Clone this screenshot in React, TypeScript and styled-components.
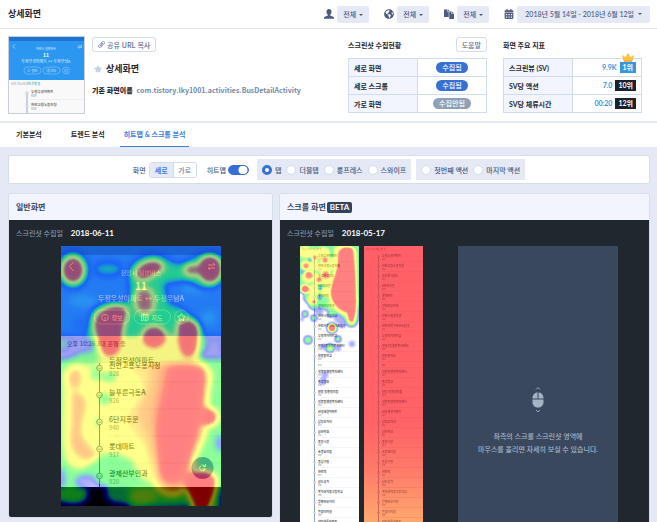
import React from "react";
import styled, { createGlobalStyle, css } from "styled-components";
import { FaCalendarAlt, FaGlobeAmericas, FaStar } from "react-icons/fa";

const font = `Lato, "Noto Sans CJK KR", sans-serif`;
const fontKr = `"Noto Sans CJK KR", sans-serif`;

const GlobalStyle = createGlobalStyle`
  * { box-sizing: border-box; }
  body { margin: 0; background: #e4e9f5; }
  button, select, input { font: inherit; color: inherit; margin: 0; }
`;

const Page = styled.div`
  height: 100vh;
  overflow: hidden;
  font: 500 7px/12px ${font};
  color: #1f2730;
`;

/* ---------- top bar ---------- */

const TopBar = styled.header`
  display: flex;
  align-items: center;
  justify-content: space-between;
  height: 29px;
  padding: 0 7px 0 8px;
  background: #fff;
  border-bottom: 1px solid #dfe5f2;
`;

const PageTitle = styled.h1`
  margin: 0;
  font-size: 9px;
  font-weight: 700;
`;

const Filters = styled.div`
  display: flex;
  gap: 15px;
`;

const Filter = styled.label`
  display: flex;
  align-items: center;
  gap: 3px;
  color: #4d5b7f;
  svg { width: 10px; height: 10px; }
`;

const SelectBox = styled.span`
  position: relative;
  display: flex;
`;

const Select = styled.select`
  appearance: none;
  width: 32px;
  height: 17px;
  padding: 0 12px 0 6px;
  border: 0;
  border-radius: 2px;
  background: #e4e9f5;
  line-height: 17px;
`;

const Caret = styled.i`
  width: 0;
  height: 0;
  border: 2px solid transparent;
  border-top-color: #4d5b7f;
  border-bottom: 0;
`;

const SelectCaret = styled(Caret)`
  position: absolute;
  right: 6px;
  top: 8px;
  pointer-events: none;
`;

const DateButton = styled.button`
  display: flex;
  align-items: center;
  gap: 4px;
  height: 17px;
  padding: 0 8px;
  border: 0;
  border-radius: 2px;
  background: #e4e9f5;
  white-space: nowrap;
`;

/* ---------- summary ---------- */

const Summary = styled.section`
  display: flex;
  padding: 7px 15px 7px 8px;
  background: #fff;
  border-bottom: 2px solid #e4e9f5;
`;

const Thumb = styled.div`
  flex: none;
  width: 77px;
  height: 78px;
  border: 1px solid #c9cfda;
  svg { display: block; width: 100%; height: 100%; }
`;

const Identity = styled.div`
  display: flex;
  flex: 1;
  flex-direction: column;
  align-items: flex-start;
  padding: 1px 0 0 7px;
`;

const OutlineButton = styled.button`
  display: flex;
  align-items: center;
  gap: 2px;
  height: 15px;
  padding: 0 5px;
  border: 1px solid #d3dceb;
  border-radius: 3px;
  background: #fff;
  color: #60708e;
  font-family: ${fontKr};
  white-space: nowrap;
  svg { width: 7px; height: 7px; }
`;

const ScreenName = styled.h2`
  display: flex;
  align-items: center;
  gap: 4px;
  margin: 11px 0 9px 2px;
  font-size: 9px;
  font-weight: 700;
  line-height: 12px;
  svg { width: 8px; height: 8px; color: #c3d0e4; }
`;

const NameRow = styled.p`
  display: flex;
  gap: 4px;
  margin: 0;
  font-family: ${fontKr};
  font-weight: 700;
  color: #7389a7;
  white-space: nowrap;
  strong { color: #1f2730; }
`;

const Stat = styled.section`
  width: 139px;
  & + & { margin-left: 16px; }
`;

const StatHead = styled.div`
  display: flex;
  align-items: center;
  justify-content: space-between;
  height: 17px;
  margin-bottom: 5px;
`;

const StatTitle = styled.h3`
  margin: 0;
  font-size: 7px;
  font-weight: 700;
`;

const StatTable = styled.table`
  width: 100%;
  border-collapse: collapse;
  table-layout: fixed;
  th, td {
    height: 18px;
    padding: 0 5px;
    border: 1px solid #cfdcec;
    line-height: 10px;
  }
  th {
    background: #f2f5fd;
    text-align: left;
    font-weight: 700;
  }
`;

const StatusCell = styled.td`
  text-align: center;
`;

const Pill = styled.span<{ $off?: boolean }>`
  display: inline-block;
  padding: 0 6px;
  border-radius: 6px;
  background: ${(p) => (p.$off ? "#8fa1b6" : "#3670d3")};
  color: #fff;
  line-height: 11px;
`;

const MetricCell = styled.td`
  text-align: right;
  color: #2f95dc;
  font-weight: 700;
`;

const Rank = styled.span<{ $first?: boolean }>`
  position: relative;
  display: inline-block;
  margin-left: 3px;
  padding: 0 3px;
  background: ${(p) => (p.$first ? "#3498db" : "#1b222c")};
  color: #fff;
  line-height: 11px;
`;

const Crown = styled.svg`
  position: absolute;
  top: -9px;
  left: 2px;
  width: 12px;
  height: 9px;
`;

/* ---------- tabs ---------- */

const Tabs = styled.nav`
  display: flex;
  gap: 21px;
  height: 24px;
  padding-left: 12px;
  background: #fff;
`;

const Tab = styled.a<{ $active?: boolean }>`
  padding: 0 4px;
  border-bottom: 1px solid transparent;
  color: #1f2730;
  font-weight: 700;
  line-height: 23px;
  text-decoration: none;
  white-space: nowrap;
  &:last-child { margin-left: -10px; }
  ${(p) =>
    p.$active &&
    css`
      border-color: #3b7ddd;
      color: #3b7ddd;
    `}
`;

/* ---------- options ---------- */

const Content = styled.main`
  padding: 8px 7px 5px 8px;
`;

const Options = styled.form`
  display: flex;
  align-items: center;
  justify-content: center;
  height: 29px;
  margin-bottom: 9px;
  border: 1px solid #d5deec;
  border-radius: 2px;
  background: #fff;
  color: #47587a;
  white-space: nowrap;
`;

const Segmented = styled.div`
  display: flex;
  margin: 0 10px 0 3px;
  border: 1px solid #d3dceb;
  border-radius: 3px;
  overflow: hidden;
`;

const Segment = styled.button<{ $active?: boolean }>`
  width: 23px;
  height: 14px;
  padding: 0;
  border: 0;
  background: ${(p) => (p.$active ? "#e4e9f5" : "#fff")};
  color: ${(p) => (p.$active ? "#3b7ddd" : "#7484a0")};
  font-weight: ${(p) => (p.$active ? 700 : 500)};
  & + & { border-left: 1px solid #d3dceb; }
`;

const ToggleLabel = styled.label`
  display: flex;
  align-items: center;
  gap: 2px;
`;

const Toggle = styled.input`
  appearance: none;
  width: 21px;
  height: 10px;
  border: 1px solid #3670d3;
  border-radius: 5px;
  background: radial-gradient(circle at 14px 4px, #fff 4px, #3670d3 5px);
`;

const RadioGroup = styled.fieldset`
  display: flex;
  align-items: center;
  gap: 5px;
  height: 21px;
  margin: 0 0 0 8px;
  padding: 0 5px;
  border: 0;
  background: #e4e9f5;
  & + & { margin-left: 5px; }
`;

const RadioLabel = styled.label`
  display: flex;
  align-items: center;
  gap: 3px;
`;

const Radio = styled.input`
  appearance: none;
  width: 10px;
  height: 10px;
  border: 1px solid #d3dceb;
  border-radius: 50%;
  background: #fff;
  &:checked { border: 3px solid #3670d3; }
`;

/* ---------- panels ---------- */

const Panels = styled.div`
  display: grid;
  grid-template-columns: 5fr 7fr;
  align-items: start;
  gap: 6px;
`;

const Panel = styled.section`
  border: 1px solid #d5deec;
  border-radius: 3px;
  overflow: hidden;
`;

const PanelHead = styled.h2`
  display: flex;
  align-items: center;
  gap: 1px;
  height: 26px;
  margin: 0;
  padding: 0 7px;
  background: #f2f5fd;
  color: #34435c;
  font-size: 8px;
  font-weight: 700;
`;

const Beta = styled.span`
  padding: 0 3px;
  border-radius: 2px;
  background: #34435c;
  color: #fff;
  line-height: 11px;
`;

const PanelBody = styled.div<{ $tall?: boolean }>`
  padding-bottom: ${(p) => (p.$tall ? "40px" : "11px")};
  background: #20272f;
`;

const Collected = styled.p`
  display: flex;
  gap: 8px;
  margin: 0;
  padding: 7px;
  color: #8495a9;
  strong { color: #fff; font-size: 8px; }
`;

const PhoneShot = styled.svg`
  display: block;
  width: 160px;
  height: 260px;
  margin: 0 auto;
`;

const ScrollArea = styled.div`
  display: flex;
  justify-content: space-between;
  padding: 0 31px 0 20px;
`;

const Strips = styled.div`
  display: flex;
  gap: 5px;
`;

const StripShot = styled.svg`
  width: 59px;
  height: 320px;
`;

const Preview = styled.div`
  display: flex;
  flex-direction: column;
  align-items: center;
  width: 160px;
  padding-top: 141px;
  background: #3a485e;
  color: #a6b3c5;
  line-height: 13px;
  text-align: center;
  white-space: nowrap;
  svg { width: 12px; height: 26px; margin-bottom: 17px; }
  p { margin: 0; }
`;

/* ---------- drawings ---------- */

const UserIcon = () => (
  <svg viewBox="0 0 20 20" fill="currentColor" aria-hidden="true">
    <path d="M10 0c3 0 5 2 5 5.500 0 2.500-1 4.500-2.500 5.800v1.700c2 1.200 5.500 2 7.500 4v2.500H0V17c2-2 5.500-2.800 7.500-4v-1.700C6 10 5 8 5 5.500 5 2 7 0 10 0z" />
  </svg>
);

const CopyIcon = () => (
  <svg viewBox="0 0 20 20" fill="currentColor" aria-hidden="true">
    <path d="M0 1h7v5h2.500V16H0zM8 1l2.500 2.500V5H8z" />
    <path d="M10.500 5H15v5h5v10h-9.500zM16 5l4 4h-4z" />
  </svg>
);

const LinkIcon = () => (
  <svg viewBox="0 0 24 24" fill="none" stroke="currentColor" strokeWidth="2.600" strokeLinecap="round" aria-hidden="true">
    <path d="M9 15.500 16.500 8M11 7l4.500-4.500a4 4 0 0 1 6 6L15 15a4 4 0 0 1-5 .500M14 16l-5 5a4 4 0 0 1-6-6l6.500-6.500a4 4 0 0 1 4-.500" />
  </svg>
);

const MouseIcon = () => (
  <svg viewBox="0 0 24 52" aria-hidden="true">
    <path d="M8 5l4-4 4 4M8 46l4 4 4-4" fill="none" stroke="#a6b3c5" strokeWidth="1.800" />
    <path d="M11 11v12H1c0-7 4-12 10-12zM13 11c6 0 10 5 10 12H13zM1 25h22v5c0 7-4.500 11-11 11S1 37 1 30z" fill="#a6b3c5" />
  </svg>
);

const CrownIcon = () => (
  <Crown viewBox="0 0 24 18" aria-hidden="true">
    <path d="M1 5l6 4 5-8 5 8 6-4-3 12H4z" fill="#fdc23e" stroke="#f6a73b" strokeWidth="1" />
    <path d="M4 15h16v2H4z" fill="#f39a3b" />
  </Crown>
);

const Thumbnail = () => (
  <svg viewBox="0 0 75 76" preserveAspectRatio="none" fontFamily="Noto Sans CJK KR, sans-serif" aria-hidden="true">
    <rect width="75" height="76" fill="#f9f9f9" />
    <rect width="75" height="43" fill="#2b97f0" />
    <rect width="75" height="4" fill="#1d75d2" />
    <g fill="none" stroke="#8cc6f7" strokeWidth=".6">
      <path d="M6 7.500 4 9.500l2 2M69 9h4l-1-1M73 10.500h-4l1 1" stroke="#d5ebfc" />
      <rect x="15" y="30" width="17" height="7" rx="3.500" />
      <rect x="34" y="30" width="17" height="7" rx="3.500" />
      <circle cx="57" cy="33.500" r="3.500" />
      <circle cx="20" cy="33.500" r="1.200" />
      <path d="M38 32h3v3h-3zM39.500 32v3M57 31.500l.6 1.300 1.400.2-1 1 .2 1.400-1.200-.7-1.200.7.2-1.400-1-1 1.400-.2z" />
    </g>
    <g fill="#cfe8fc" textAnchor="middle">
      <text x="37" y="13" fontSize="3">천안시 일반버스</text>
      <text x="37" y="20" fontSize="5" fontWeight="700" fill="#fff">11</text>
      <text x="37" y="25.500" fontSize="4">두정우성아파트 ↔ 두정우남A</text>
      <text x="25.500" y="34.800" fontSize="3">정보</text>
      <text x="44.500" y="34.800" fontSize="3">지도</text>
    </g>
    <text x="2" y="47.500" fontSize="3" fill="#a0a7ae">오후 10:26 <tspan fill="#36a6a6">3대 운행 중</tspan></text>
    <path d="M18 56v20" stroke="#b3c0d6" strokeWidth="1.400" />
    <circle cx="18" cy="56" r="1.300" fill="#fff" stroke="#a5b4cc" strokeWidth=".6" />
    <circle cx="18" cy="69" r="1.300" fill="#fff" stroke="#a5b4cc" strokeWidth=".6" />
    <path d="M22 62.500h53" stroke="#e8e8e8" strokeWidth=".6" />
    <g fontSize="3.500" fill="#333">
      <text x="22" y="55.500">두정우성아파트</text>
      <text x="22" y="68.500">천안고용노동지청</text>
      <text x="22" y="59.500" fontSize="3" fill="#999">929</text>
      <text x="22" y="72.500" fontSize="3" fill="#999">928</text>
    </g>
  </svg>
);

/* Grey levels are blurred, then mapped to the blue-green-yellow-red heat ramp. */
const HeatFilter = ({ id, blur }: { id: string; blur: number }) => (
  <filter id={id} x="-10%" y="-10%" width="120%" height="120%" colorInterpolationFilters="sRGB">
    <feGaussianBlur stdDeviation={blur} />
    <feColorMatrix values="1 0 0 0 0  1 0 0 0 0  1 0 0 0 0  1 0 0 0 0" />
    <feComponentTransfer>
      <feFuncR type="table" tableValues="0 0 0 0 .1 .6 1 1 1 1 1" />
      <feFuncG type="table" tableValues="0 0 .1 .7 1 1 1 1 .6 .1 0" />
      <feFuncB type="table" tableValues="1 1 1 .6 .2 .1 .1 .1 .05 0 0" />
      <feFuncA type="table" tableValues="0 .25 .4 .5 .5 .5 .5 .5 .5 .5 .5" />
    </feComponentTransfer>
  </filter>
);

const G = { none: "#000", tint: "#262626", green: "#666", lime: "#808080", yellow: "#a6a6a6", orange: "#c6c6c6", red: "#fff" };

const stops = [
  { name: "천안고용노동지청", no: "928", y: 122 },
  { name: "늘푸른극동A", no: "926", y: 149 },
  { name: "6단지후문", no: "940", y: 176 },
  { name: "롯데마트", no: "917", y: 203 },
  { name: "광제산부인과", no: "920", y: 230 },
];

const HeatPhone = () => (
  <PhoneShot viewBox="0 0 160 260" fontFamily="Noto Sans CJK KR, sans-serif" role="img" aria-label="일반화면 히트맵">
    <defs>
      <HeatFilter id="heat-phone" blur={3} />
    </defs>
    <rect width="160" height="260" fill="#fff" />
    <rect width="160" height="90" fill="#2b97f0" />
    <rect width="160" height="9" fill="#2178c8" />
    <rect y="90" width="160" height="27" fill="#e9e9ea" />
    <rect y="241" width="160" height="19" fill="#000" />
    <g fill="none" stroke="#fff" strokeWidth=".9">
      <path d="M12.500 16 8.500 20.500l4 4.500M147 19h7l-2-2M154 22h-7l2 2" />
      <rect x="33.500" y="64" width="35" height="14" rx="7" opacity=".5" />
      <rect x="73" y="64" width="36.500" height="14" rx="7" opacity=".5" />
      <circle cx="120.500" cy="71" r="7" opacity=".5" />
      <circle cx="44" cy="71.500" r="3.300" />
      <path d="M44 71v2.500M44 69.200v.8M80.500 69l2.200-1 2.200 1 2.200-1v6l-2.200 1-2.200-1-2.200 1zM82.700 68v6M84.900 69v6" />
      <path d="M120.500 67.500l1.200 2.500 2.700.3-2 1.900.5 2.700-2.400-1.300-2.400 1.300.5-2.700-2-1.900 2.700-.3z" />
    </g>
    <g fill="#fff" textAnchor="middle">
      <text x="80" y="28.500" fontSize="6" opacity=".7">천안시 일반버스</text>
      <text x="80" y="44" fontSize="10" fontWeight="700">11</text>
      <text x="80" y="54.500" fontSize="7" opacity=".8">두정우성아파트 ↔ 두정우남A</text>
      <text x="56" y="74" fontSize="6">정보</text>
      <text x="96" y="74" fontSize="6">지도</text>
    </g>
    <text x="6" y="100" fontSize="6" fill="#666">오후 10:26 3대 운행 중</text>
    <text x="48" y="117" fontSize="7" fill="#222">두정우성아파트</text>
    <path d="M38.500 117v124" stroke="#35506a" strokeWidth="1" />
    <path d="M48 136h112M48 163h112M48 190h112M48 217h112" stroke="#e4e4e4" strokeWidth=".6" />
    {stops.map((s) => (
      <g key={s.no}>
        <circle cx="38.500" cy={s.y} r="2.800" fill="#eee" stroke="#35506a" strokeWidth=".8" />
        <path d={`M37 ${s.y - 0.5}l1.500 1.500 1.500-1.500`} fill="none" stroke="#35506a" strokeWidth=".7" />
        <text x="48" y={s.y} fontSize="7" fill="#111">{s.name}</text>
        <text x="48" y={s.y + 8} fontSize="6" fill="#888">{s.no}</text>
      </g>
    ))}
    <circle cx="141.500" cy="222" r="11" fill="#6a68c4" />
    <path d="M144 220a3 3 0 1 0 .5 3h-3M144.500 218v2.500h-2.500" fill="none" stroke="#fff" strokeWidth="1" />
    <g filter="url(#heat-phone)">
      <rect x="-20" y="-20" width="200" height="300" fill="#131313" />
      <ellipse cx="22" cy="55" rx="14" ry="6" fill="#030303" />
      <ellipse cx="134" cy="42" rx="14" ry="6" fill="#030303" />
      <ellipse cx="20" cy="78" rx="8" ry="6" fill="#202020" />
      <ellipse cx="148" cy="72" rx="8" ry="7" fill="#030303" />
      <ellipse cx="12" cy="24" rx="15" ry="18" fill={G.green} />
      <ellipse cx="12" cy="24" rx="11" ry="13" fill={G.red} />
      <ellipse cx="47" cy="23" rx="14" ry="7" fill="#4e4e4e" />
      <path d="M68 30C66 20 78 10 92 9c12 0 16 8 26 9 10 0 14-9 28-10 10 0 18 3 18 14 0 14-8 20-18 20-12 0-14-8-26-7-8 2-15 0-17 5l5 18c12 2 20 8 27 17 8 10 10 20 10 30H26c-4-14 0-24 8-32 10-10 28-14 35-20z" fill={G.green} />
      <path d="M70 28c2-10 12-15 22-15 8 0 14 8 12 12-8 2-14 8-22 12-8 2-13-3-12-9z" fill={G.lime} />
      <path d="M75 26c3-8 12-11 18-11 7 0 11 5 9 9-6 2-10 6-16 9-6 2-12-1-11-7z" fill={G.red} />
      <ellipse cx="149" cy="23" rx="12" ry="14" fill={G.red} />
      <ellipse cx="131" cy="24" rx="8" ry="6" fill="#e8e8e8" />
      <path d="M75 46c4-6 15-6 17 2 2 6 2 12 0 17-5 4-13 4-16-1-3-5-3-13-1-18z" fill="#e0e0e0" />
      <path d="M-10 112c16 4 34-4 40-20l15-10h65l22 6c0 10 4 20 8 24h30v160H-10z" fill={G.green} />
      <path d="M-10 90h46v16H-10zM140 90h30v18h-24z" fill="#484848" />
      <path d="M66 92c12 0 46-8 62 0 12 4 12 12 10 22l10 8c8 10-2 20 0 30-6 10 2 30-4 40l-14 30c-8 14-40 20-50 8-8-12-4-16-16-20-10-6-28-4-32 4l-10 8c-10 2-16-4-18-14-4-30 2-56-2-78 4-12 12-14 22-10 12 2 18-8 24-12z" fill={G.yellow} />
      <path d="M30 78c-2-12 8-20 24-21 12 0 16 7 12 16-4 10-2 20-5 31-3 10-20 12-24 3-3-10-5-18-7-29z" fill={G.yellow} />
      <path d="M34 78c0-10 13-18 23-18 9 0 10 6 7 14-4 10-2 18-5 28-3 10-16 11-18 3-2-9-7-17-7-27z" fill={G.red} />
      <ellipse cx="93" cy="91" rx="12" ry="11" fill={G.red} />
      <path d="M116 80c2-9 20-9 22 2 1 10-2 26-9 29-9 2-10-9-12-17z" fill={G.red} />
      <ellipse cx="19" cy="100" rx="13" ry="7" fill={G.tint} />
      <ellipse cx="153" cy="101" rx="8" ry="8" fill={G.tint} />
      <ellipse cx="14" cy="133" rx="7" ry="11" fill="#cecece" />
      <path d="M10 146c8-2 16 4 16 12s-6 18-5 28c2 12 14 16 16 24-4 8-16 6-22 0-8-10-8-16-5-30z" fill="#cecece" />
      <ellipse cx="48" cy="131" rx="9" ry="6" fill={G.green} />
      <ellipse cx="44" cy="153" rx="7" ry="7" fill={G.green} />
      <ellipse cx="34" cy="128" rx="5" ry="8" fill={G.green} />
      <ellipse cx="36" cy="176" rx="4" ry="10" fill={G.lime} />
      <path d="M66 120c20-8 66-8 78 2 6 12 0 26 2 40-2 14-2 30-8 42-4 16-8 34-18 44-10 4-20 2-26-8-6-14-8-26-12-40-8-10-16-16-18-28 4-14 18-22 16-34-2-8-12-12-14-18z" fill="#bebebe" />
      <path d="M88 121c10-6 50-6 57 2 6 10 0 24 2 38-2 14-4 30-10 42-4 16-8 32-14 40-8 4-18 2-24-8-4-16-10-28-12-42-4-12-14-20-8-32 6-12 12-26 9-40z" fill="#cdcdcd" />
      <path d="M100 119c8-4 38-5 44 2 4 12-2 26 0 40-2 14-4 28-10 40-4 16-8 32-14 40-8 3-17 1-22-8-1-28-8-50-6-70 4-14 6-28 8-44z" fill="#dadada" />
      <path d="M108 124c8-4 30-4 34 2 0 12-2 24-3 38-2 14-6 28-10 40-4 14-8 24-12 30-6 2-12 0-16-6-2-24-6-46-1-64 4-14 6-26 8-40z" fill={G.red} />
      <ellipse cx="148" cy="171" rx="9" ry="9" fill={G.red} />
      <ellipse cx="56" cy="190" rx="4" ry="4" fill={G.orange} />
      <path d="M154 184c-10 10-20 26-22 34l32-4v-40z" fill={G.green} />
      <ellipse cx="159" cy="197" rx="4" ry="8" fill={G.tint} />
      <path d="M124 230c8-6 26-8 31 2 2 10-4 22-9 34h-12c-2-14-11-20-10-36z" fill={G.red} />
      <ellipse cx="0" cy="234" rx="4" ry="12" fill={G.tint} />
      <ellipse cx="25" cy="236" rx="11" ry="7" fill={G.tint} />
      <ellipse cx="70" cy="226" rx="5" ry="9" fill={G.green} />
      <path d="M-10 256h10c16 6 30 0 30-12 12-2 20 12 40 16v14H-10z" fill={G.none} />
      <path d="M28 240h18l-6 30H24z" fill={G.none} />
      <ellipse cx="9" cy="248" rx="15" ry="9" fill={G.green} />
      <ellipse cx="58" cy="249" rx="13" ry="9" fill="#585858" />
      <ellipse cx="82" cy="250" rx="14" ry="8" fill={G.lime} />
      <path d="M72 264c20-6 40-2 56-6l4 16H60z" fill={G.tint} />
      <path d="M158 242h10v30h-10z" fill={G.tint} />
    </g>
  </PhoneShot>
);

const stripStops = [
  "두정우성아파트", "천안고용노동지청", "늘푸른극동A", "6단지후문", "롯데마트", "광제산부인과",
  "천안시청중학교", "천안서북구보건소입구", "두정역이마트앞", "쌍용2동행정복지센터", "쌍용중학교", "",
  "일봉동행정복지센터", "충무병원", "쌍용 동행정지점", "일봉동행정복지센터", "선경세광아파트", "남부오거리", "삼선학원", "중앙시장",
  "소풍요리점", "동남구청", "천안역", "삼도상가", "복자여자중고등학교", "방죽안오거리", "종합터미널", "대림한들아파트",
];

const rowTop = (i: number) => i * 10 - (i > 11 ? 4 : 0);

const StripRows = ({ tinted }: { tinted?: boolean }) => (
  <g fontFamily="Noto Sans CJK KR, sans-serif" opacity={tinted ? 0.6 : 1}>
    <text x="2" y="4" fontSize="2" fill={tinted ? "#a02030" : "#888"}>오후 10:26 3대 운행 중</text>
    <path d="M14.500 10v310" stroke={tinted ? "#a8434c" : "#90a3bd"} strokeWidth="1" />
    {stripStops.map((name, i) => (
      <g key={i}>
        {name && (
          <circle cx="14.500" cy={10.5 + rowTop(i)} r="1" fill={tinted ? "#d8626a" : "#dce4ef"} stroke={tinted ? "#8c3038" : "#90a3bd"} strokeWidth=".4" />
        )}
        <text x="18" y={10.5 + rowTop(i)} fontSize="3" fontWeight="500" fill={tinted ? "#5a0f18" : "#222"}>{name}</text>
        <text x="18" y={(name ? 13.8 : 9.5) + rowTop(i)} fontSize="2" fill={tinted ? "#7c202a" : "#888"}>{929 - i}</text>
        <path d={`M18 ${(name ? 15.5 : 11.5) + rowTop(i)}h41`} stroke={tinted ? "#e0565e" : "#e6e9ee"} strokeWidth=".4" />
      </g>
    ))}
  </g>
);

const spots: [number, number, number, string][] = [
  [5, 6, 6, G.yellow], [14, 8, 6, G.yellow], [6, 19, 5, G.yellow], [14, 20, 5, G.yellow], [23, 8, 7, G.yellow],
  [24, 22, 7, G.yellow], [8, 31, 6, G.yellow], [18, 32, 6, G.yellow], [32, 18, 6, G.yellow], [14, 44, 6, G.yellow],
  [27, 34, 6, G.yellow], [26, 46, 5, G.yellow], [12, 54, 5, G.yellow], [24, 57, 4, G.green], [32, 58, 5, G.lime],
  [20, 42, 2, G.tint], [10, 14, 2, G.tint], [2, 26, 2, G.tint], [19, 27, 2, G.green], [9, 39, 2, G.green], [20, 51, 2, G.tint],
  [0, 50, 4, G.none], [3, 61, 6, G.none], [25, 14, 3, "#e8e8e8"], [15, 12, 3, "#d6d6d6"], [9, 29, 4, "#e8e8e8"],
  [19, 34, 3, "#e4e4e4"], [26, 29, 4, "#e4e4e4"], [5, 43, 4, G.red], [14, 56, 2, G.red], [6, 20, 3, "#e8e8e8"],
  [19, 65, 4, G.tint], [5, 68, 3, G.green], [14, 72, 3, G.green], [31, 68, 3, G.green], [38, 72, 4, G.tint],
  [2, 73, 2, G.tint], [32, 82, 5, G.green], [32, 82, 4, G.red], [42, 78, 4, G.tint], [8, 94, 4, G.green],
  [38, 93, 3, G.green], [52, 98, 3, G.tint], [30, 102, 4, G.lime], [38, 102, 3, G.tint], [24, 101, 3, G.tint],
  [25, 129, 3, G.tint], [23, 134, 3, G.tint], [23, 136, 3, G.tint],
];

const HeatStrip = () => (
  <StripShot viewBox="0 0 59 320" role="img" aria-label="스크롤 화면 히트맵">
    <defs>
      <HeatFilter id="heat-strip" blur={1.1} />
    </defs>
    <rect width="59" height="320" fill="#fff" />
    <StripRows />
    <g filter="url(#heat-strip)">
      <rect x="-10" y="-10" width="80" height="340" fill={G.none} />
      <path d="M-4-5h64v60l-2 20c-2 8-12 8-14-2-12-2-14-8-20-10-12 4-16-2-20-10-8-10-10-26-8-58z" fill="#606060" />
      {spots.map(([x, y, r, fill], i) => (
        <circle key={i} cx={x} cy={y} r={r} fill={fill} />
      ))}
      <path d="M34 2c8-4 20-2 22 2 2 16 0 36 2 52-2 8 0 16-4 22-4 4-8-4-8-8-8-2-15-8-17-18-2-12 5-22 5-34z" fill={G.yellow} />
      <path d="M38 8c2-8 14-8 15-4 2 16 3 36 3 52 0 6-1 18-4 20-4 0-4-8-5-10-6 0-15-8-16-18 0-12 7-22 7-32z" fill={G.red} />
    </g>
  </StripShot>
);

const ReachStrip = () => (
  <StripShot viewBox="0 0 59 320" role="img" aria-label="스크롤 도달률">
    <defs>
      <linearGradient id="reach" x1="0" y1="0" x2="0" y2="1">
        <stop offset="0" stopColor="#ff6067" />
        <stop offset=".55" stopColor="#ff6267" />
        <stop offset=".7" stopColor="#ff7a69" />
        <stop offset=".85" stopColor="#ffa56d" />
        <stop offset="1" stopColor="#ffb570" />
      </linearGradient>
    </defs>
    <rect width="59" height="320" fill="url(#reach)" />
    <StripRows tinted />
  </StripShot>
);

/* ---------- page ---------- */

const scopeFilters = [
  { label: "사용자", icon: <UserIcon /> },
  { label: "국가", icon: <FaGlobeAmericas /> },
  { label: "버전", icon: <CopyIcon /> },
];

const statuses = [
  { name: "세로 화면", value: "수집됨" },
  { name: "세로 스크롤", value: "수집됨" },
  { name: "가로 화면", value: "수집안됨", off: true },
];

const metrics = [
  { name: "스크린뷰 (SV)", value: "9.9K", rank: "1위", first: true },
  { name: "SV당 액션", value: "7.0", rank: "10위" },
  { name: "SV당 체류시간", value: "00:20", rank: "12위" },
];

const gestureGroups = [
  { name: "gesture", items: ["탭", "더블탭", "롱프레스", "스와이프"], checked: "탭" },
  { name: "order", items: ["첫번째 액션", "마지막 액션"], checked: "" },
];

export default function App() {
  return (
    <Page lang="ko">
      <GlobalStyle />
      <TopBar>
        <PageTitle>상세화면</PageTitle>
        <Filters>
          {scopeFilters.map((f) => (
            <Filter key={f.label}>
              {f.icon}
              <SelectBox>
                <Select aria-label={f.label}>
                  <option>전체</option>
                </Select>
                <SelectCaret />
              </SelectBox>
            </Filter>
          ))}
          <Filter as="div">
            <FaCalendarAlt />
            <DateButton type="button">
              2018년 5월 14일 - 2018년 6월 12일
              <Caret />
            </DateButton>
          </Filter>
        </Filters>
      </TopBar>

      <Summary>
        <Thumb>
          <Thumbnail />
        </Thumb>
        <Identity>
          <OutlineButton type="button">
            <LinkIcon />
            공유 URL 복사
          </OutlineButton>
          <ScreenName>
            <FaStar />
            상세화면
          </ScreenName>
          <NameRow>
            <strong>기존 화면이름</strong>
            <span>com.tistory.lky1001.activities.BusDetailActivity</span>
          </NameRow>
        </Identity>
        <Stat>
          <StatHead>
            <StatTitle>스크린샷 수집현황</StatTitle>
            <OutlineButton type="button">도움말</OutlineButton>
          </StatHead>
          <StatTable>
            <tbody>
              {statuses.map((s) => (
                <tr key={s.name}>
                  <th scope="row">{s.name}</th>
                  <StatusCell>
                    <Pill $off={s.off}>{s.value}</Pill>
                  </StatusCell>
                </tr>
              ))}
            </tbody>
          </StatTable>
        </Stat>
        <Stat>
          <StatHead>
            <StatTitle>화면 주요 지표</StatTitle>
          </StatHead>
          <StatTable>
            <tbody>
              {metrics.map((m) => (
                <tr key={m.name}>
                  <th scope="row">{m.name}</th>
                  <MetricCell>
                    {m.value}
                    <Rank $first={m.first}>
                      {m.rank}
                      {m.first && <CrownIcon />}
                    </Rank>
                  </MetricCell>
                </tr>
              ))}
            </tbody>
          </StatTable>
        </Stat>
      </Summary>

      <Tabs>
        <Tab href="#basic">기본분석</Tab>
        <Tab href="#trend">트렌드 분석</Tab>
        <Tab href="#heatmap" $active>히트맵 &amp; 스크롤 분석</Tab>
      </Tabs>

      <Content>
        <Options>
          <span>화면</span>
          <Segmented>
            <Segment type="button" $active>세로</Segment>
            <Segment type="button">가로</Segment>
          </Segmented>
          <ToggleLabel>
            히트맵
            <Toggle type="checkbox" role="switch" defaultChecked />
          </ToggleLabel>
          {gestureGroups.map((g) => (
            <RadioGroup key={g.name}>
              {g.items.map((item) => (
                <RadioLabel key={item}>
                  <Radio type="radio" name={g.name} defaultChecked={item === g.checked} />
                  {item}
                </RadioLabel>
              ))}
            </RadioGroup>
          ))}
        </Options>

        <Panels>
          <Panel>
            <PanelHead>일반화면</PanelHead>
            <PanelBody>
              <Collected>
                스크린샷 수집일 <strong>2018-06-11</strong>
              </Collected>
              <HeatPhone />
            </PanelBody>
          </Panel>
          <Panel>
            <PanelHead>
              스크롤 화면 <Beta>BETA</Beta>
            </PanelHead>
            <PanelBody $tall>
              <Collected>
                스크린샷 수집일 <strong>2018-05-17</strong>
              </Collected>
              <ScrollArea>
                <Strips>
                  <HeatStrip />
                  <ReachStrip />
                </Strips>
                <Preview>
                  <MouseIcon />
                  <p>좌측의 스크롤 스크린샷 영역에</p>
                  <p>마우스를 올리면 자세히 보실 수 있습니다.</p>
                </Preview>
              </ScrollArea>
            </PanelBody>
          </Panel>
        </Panels>
      </Content>
    </Page>
  );
}
